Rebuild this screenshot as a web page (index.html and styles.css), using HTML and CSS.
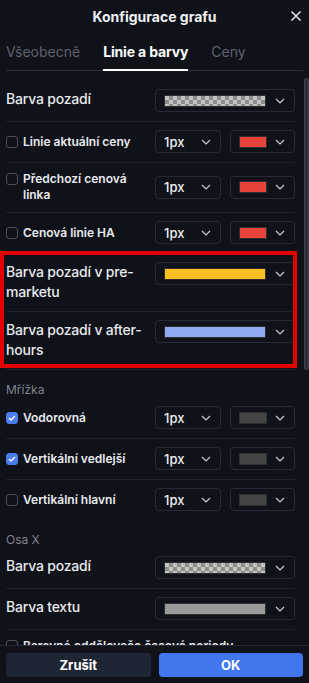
FILE: index.html
```html
<!DOCTYPE html>
<html>
<head>
  <title>Konfigurace grafu</title>
  <link rel="stylesheet" href="styles.css">
</head>
<body>
  <div class="dialog">
    <div class="header">
      <span></span>
      <h2 class="title">Konfigurace grafu</h2>
      <button class="close" aria-label="Zavřít">
        <svg width="12" height="12" viewBox="0 0 12 12"><path d="M1.5 1.5l9 9M10.5 1.5l-9 9" stroke="#e6e8ec" stroke-width="1.5" fill="none"/></svg>
      </button>
    </div>

    <div class="tabs">
      <div class="tab">Všeobecně</div>
      <div class="tab active">Linie a barvy</div>
      <div class="tab">Ceny</div>
    </div>

    <div class="content">
      <div class="row">
        <div class="label big">Barva pozadí</div>
        <div class="controls">
          <div class="select wide"><span class="swatch checker"></span><svg class="chev" width="10" height="6" viewBox="0 0 10 6"><path d="M1 1l4 4 4-4" /></svg></div>
        </div>
      </div>

      <div class="row center">
        <label class="label check"><span class="box"></span><span>Linie aktuální ceny</span></label>
        <div class="controls">
          <div class="select"><span class="val">1px</span><svg class="chev" width="10" height="6" viewBox="0 0 10 6"><path d="M1 1l4 4 4-4" /></svg></div>
          <div class="select"><span class="swatch small red"></span><svg class="chev" width="10" height="6" viewBox="0 0 10 6"><path d="M1 1l4 4 4-4" /></svg></div>
        </div>
      </div>

      <div class="row center">
        <label class="label check"><span class="box"></span><span>Předchozí cenová linka</span></label>
        <div class="controls">
          <div class="select"><span class="val">1px</span><svg class="chev" width="10" height="6" viewBox="0 0 10 6"><path d="M1 1l4 4 4-4" /></svg></div>
          <div class="select"><span class="swatch small red"></span><svg class="chev" width="10" height="6" viewBox="0 0 10 6"><path d="M1 1l4 4 4-4" /></svg></div>
        </div>
      </div>

      <div class="row center">
        <label class="label check"><span class="box"></span><span>Cenová linie HA</span></label>
        <div class="controls">
          <div class="select"><span class="val">1px</span><svg class="chev" width="10" height="6" viewBox="0 0 10 6"><path d="M1 1l4 4 4-4" /></svg></div>
          <div class="select"><span class="swatch small red"></span><svg class="chev" width="10" height="6" viewBox="0 0 10 6"><path d="M1 1l4 4 4-4" /></svg></div>
        </div>
      </div>

      <div class="highlight">
        <div class="row">
          <div class="label big">Barva pozadí v pre-marketu</div>
          <div class="controls">
            <div class="select wide"><span class="swatch yellow"></span><svg class="chev" width="10" height="6" viewBox="0 0 10 6"><path d="M1 1l4 4 4-4" /></svg></div>
          </div>
        </div>
        <div class="row">
          <div class="label big">Barva pozadí v after-hours</div>
          <div class="controls">
            <div class="select wide"><span class="swatch blue"></span><svg class="chev" width="10" height="6" viewBox="0 0 10 6"><path d="M1 1l4 4 4-4" /></svg></div>
          </div>
        </div>
      </div>

      <div class="section-title">Mřížka</div>

      <div class="row center">
        <label class="label check"><span class="box on"><svg width="8" height="6" viewBox="0 0 8 6"><path d="M1 3l2 2 4-4" /></svg></span><span>Vodorovná</span></label>
        <div class="controls">
          <div class="select"><span class="val">1px</span><svg class="chev" width="10" height="6" viewBox="0 0 10 6"><path d="M1 1l4 4 4-4" /></svg></div>
          <div class="select"><span class="swatch small dark"></span><svg class="chev" width="10" height="6" viewBox="0 0 10 6"><path d="M1 1l4 4 4-4" /></svg></div>
        </div>
      </div>

      <div class="row center">
        <label class="label check"><span class="box on"><svg width="8" height="6" viewBox="0 0 8 6"><path d="M1 3l2 2 4-4" /></svg></span><span>Vertikální vedlejší</span></label>
        <div class="controls">
          <div class="select"><span class="val">1px</span><svg class="chev" width="10" height="6" viewBox="0 0 10 6"><path d="M1 1l4 4 4-4" /></svg></div>
          <div class="select"><span class="swatch small dark"></span><svg class="chev" width="10" height="6" viewBox="0 0 10 6"><path d="M1 1l4 4 4-4" /></svg></div>
        </div>
      </div>

      <div class="row center last">
        <label class="label check"><span class="box"></span><span>Vertikální hlavní</span></label>
        <div class="controls">
          <div class="select"><span class="val">1px</span><svg class="chev" width="10" height="6" viewBox="0 0 10 6"><path d="M1 1l4 4 4-4" /></svg></div>
          <div class="select"><span class="swatch small dark"></span><svg class="chev" width="10" height="6" viewBox="0 0 10 6"><path d="M1 1l4 4 4-4" /></svg></div>
        </div>
      </div>

      <div class="section-title">Osa X</div>

      <div class="row">
        <div class="label big">Barva pozadí</div>
        <div class="controls">
          <div class="select wide"><span class="swatch checker"></span><svg class="chev" width="10" height="6" viewBox="0 0 10 6"><path d="M1 1l4 4 4-4" /></svg></div>
        </div>
      </div>

      <div class="row">
        <div class="label big">Barva textu</div>
        <div class="controls">
          <div class="select wide"><span class="swatch gray"></span><svg class="chev" width="10" height="6" viewBox="0 0 10 6"><path d="M1 1l4 4 4-4" /></svg></div>
        </div>
      </div>

      <div class="row center">
        <label class="label check"><span class="box"></span><span>Barevné oddělovače časové periody</span></label>
      </div>

      <div class="scrollbar"></div>
    </div>

    <div class="footer">
      <button class="btn cancel">Zrušit</button>
      <button class="btn ok">OK</button>
    </div>
  </div>
</body>
</html>
```

FILE: styles.css
```css
body {
  margin: 0;
  background-color: #0f1218;
  color: #e6e8ec;
  font-family: Inter, 'Noto Sans', sans-serif;
}

.dialog {
  width: 309px;
  height: 683px;
  display: flex;
  flex-direction: column;
  background-color: #0f1218;
  overflow: hidden;
}

.header {
  height: 32px;
  display: grid;
  grid-template-columns: 1fr auto 1fr;
  align-items: center;
}

.title {
  margin: 0;
  font-size: 14px;
  font-weight: 700;
  color: #eef0f3;
}

.close {
  justify-self: end;
  margin-right: 6px;
  width: 14px;
  height: 14px;
  padding: 0;
  border: none;
  background: none;
  display: flex;
  align-items: center;
  justify-content: center;
}

.tabs {
  display: flex;
  gap: 23px;
  margin: 0 6px;
  padding-top: 10px;
  border-bottom: 1px solid #2a2e39;
}

.tab {
  font-size: 14px;
  line-height: 20px;
  padding-bottom: 8px;
  color: #5d6270;
}

.tab.active {
  color: #ffffff;
  font-weight: 700;
  letter-spacing: -0.15px;
  padding-bottom: 6px;
  border-bottom: 2px solid #ffffff;
  margin-bottom: -1px;
}

.content {
  flex: 1;
  overflow: hidden;
  padding: 10px 14px 0 6px;
  position: relative;
}

.row {
  display: flex;
  align-items: flex-start;
  gap: 10px;
  padding: 8px 0 9px;
  border-bottom: 1px solid #1e2330;
}

.row.center {
  align-items: center;
}

.row.last {
  border-bottom: none;
}

.label {
  flex: 1;
  min-width: 0;
}

.label.big {
  font-size: 14px;
  line-height: 20px;
  font-weight: 500;
  letter-spacing: -0.2px;
  color: #e8eaee;
}

.label.check {
  display: flex;
  align-items: flex-start;
  gap: 5px;
  font-size: 12px;
  line-height: 16px;
  font-weight: 600;
  color: #e8eaee;
}

.box {
  flex: none;
  width: 12px;
  height: 12px;
  box-sizing: border-box;
  margin-top: 2px;
  border: 1px solid #4b4f5b;
  border-radius: 3px;
  display: flex;
  align-items: center;
  justify-content: center;
}

.box.on {
  background-color: #4a7cf0;
  border-color: #4a7cf0;
}

.box svg path {
  stroke: #ffffff;
  stroke-width: 1.4;
  fill: none;
}

.controls {
  flex: none;
  width: 140px;
  display: flex;
  gap: 9px;
}

.select {
  flex: 1;
  height: 23px;
  box-sizing: border-box;
  border: 1px solid #262b36;
  border-radius: 4px;
  display: flex;
  align-items: center;
  padding: 0 9px 0 8px;
}

.val {
  font-size: 13px;
  font-weight: 500;
  color: #eef0f3;
}

.chev {
  margin-left: auto;
}

.chev path {
  stroke: #c9ccd4;
  stroke-width: 1.2;
  fill: none;
}

.swatch {
  width: 102px;
  height: 12px;
  box-sizing: border-box;
  border: 1px solid #2e2e2e;
}

.swatch.small {
  width: 28px;
}

.checker {
  background: repeating-conic-gradient(#8c8c8c 0 25%, #c4c4c4 0 50%) 0 0 / 8px 8px;
}

.red {
  background-color: #e8433a;
}

.yellow {
  background-color: #fbbf24;
}

.blue {
  background-color: #8fa8f2;
}

.dark {
  background-color: #444444;
}

.gray {
  background-color: #9a9a9a;
}

.highlight {
  position: relative;
}

.highlight::after {
  content: "";
  position: absolute;
  top: -3px;
  left: -6px;
  right: -2px;
  bottom: 2px;
  border: 4px solid #e50000;
  pointer-events: none;
}

.section-title {
  font-size: 12px;
  line-height: 16px;
  color: #80848f;
  padding-top: 12px;
}

.scrollbar {
  position: absolute;
  top: 7px;
  right: 0;
  width: 3px;
  height: 290px;
  border-radius: 2px;
  background-color: #2b303b;
  border: 1px solid #3c414c;
}

.footer {
  display: flex;
  gap: 8px;
  padding: 7px 6px 6px;
  border-top: 1px solid #252a35;
  background-color: #0f1218;
}

.btn {
  flex: 1;
  height: 24px;
  border: none;
  border-radius: 4px;
  font-family: Inter, 'Noto Sans', sans-serif;
  font-size: 13px;
  font-weight: 700;
  color: #ffffff;
}

.cancel {
  background-color: #1f2633;
}

.ok {
  background-color: #4176ee;
}
```
